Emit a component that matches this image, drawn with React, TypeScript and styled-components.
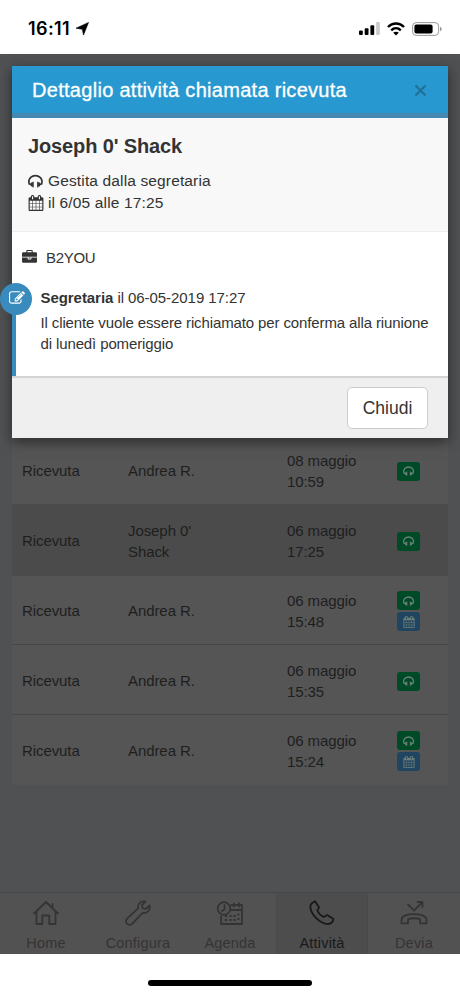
import React from "react";
import styled, { createGlobalStyle, css } from "styled-components";

const GlobalStyle = createGlobalStyle`
  *, *::before, *::after { box-sizing: border-box; }
  body { margin: 0; background: #fff; font-family: "Liberation Sans", Arial, sans-serif; }
`;

const Phone = styled.div`
  display: flex;
  flex-direction: column;
  width: 460px;
  height: 996px;
  overflow: hidden;
  background: #fff;
`;

const StatusBar = styled.header`
  display: flex;
  align-items: center;
  gap: 5px;
  height: 54px;
  padding: 3px 18px 0 28px;
`;

const Clock = styled.span`
  font: 600 18px/22px Inter, sans-serif;
  letter-spacing: 0.4px;
  color: #000;
`;

const StatusIcons = styled.div`
  display: flex;
  align-items: center;
  gap: 7px;
  margin-left: auto;
`;

const Screen = styled.div`
  position: relative;
  display: flex;
  flex-direction: column;
  height: 900px;
  background: #4f5153;
`;

const TableArea = styled.main`
  flex: 1;
  padding: 381px 12px 0;
`;

const Table = styled.div`
  display: flex;
  flex-direction: column;
  background: #555;
`;

const Row = styled.div<{ $selected?: boolean; $ruled?: boolean }>`
  display: grid;
  grid-template-columns: 106px 159px 110px 1fr;
  align-items: center;
  height: 70px;
  padding-left: 10px;
  font-size: 15px;
  line-height: 21px;
  letter-spacing: -0.08px;
  color: #1e1e1e;
  ${(p) => p.$ruled && css`box-shadow: inset 0 -1px #474747;`}
  ${(p) => p.$selected && css`background: #4b4b4b; box-shadow: 0 -1px #4b4b4b, 0 1px #4b4b4b;`}
`;

const Cell = styled.div<{ $narrow?: boolean }>`
  max-width: ${(p) => (p.$narrow ? "86px" : "none")};
  padding-top: 1px;
`;

const Badges = styled.div`
  display: flex;
  flex-direction: column;
  gap: 2px;
  padding-top: 2px;
`;

const Badge = styled.span<{ $tone: "green" | "blue" }>`
  display: flex;
  align-items: center;
  justify-content: center;
  width: 23px;
  height: 19px;
  border-radius: 3px;
  color: #6b7f78;
  background: ${(p) => (p.$tone === "green" ? "#004b27" : "#1f4560")};
`;

const TabBar = styled.nav`
  display: grid;
  grid-template-columns: repeat(5, 1fr);
  height: 62px;
  border-top: 1px solid #474747;
  background: #525252;
`;

const Tab = styled.div<{ $active?: boolean }>`
  display: flex;
  flex-direction: column;
  align-items: center;
  padding-top: 7px;
  font-size: 14.5px;
  line-height: 18px;
  letter-spacing: 0.2px;
  color: ${(p) => (p.$active ? "#191919" : "#343434")};
  ${(p) => p.$active && css`background: #4d4d4d; box-shadow: inset 1px 0 #494949, inset -1px 0 #494949;`}
  svg { margin-bottom: 8px; }
`;

const Dialog = styled.section`
  position: absolute;
  top: 12px;
  left: 12px;
  width: 436px;
  height: 372px;
  display: flex;
  flex-direction: column;
  background: #fff;
  color: #333;
  box-shadow: 0 4px 12px rgba(0, 0, 0, 0.5);
`;

const DialogHeader = styled.header`
  display: flex;
  align-items: center;
  justify-content: space-between;
  height: 52px;
  padding: 0 21px 3px 20px;
  border-bottom: 5px solid #4489b2;
  background: #2898d0;
`;

const DialogTitle = styled.h1`
  margin: 0;
  padding-top: 3px;
  font-size: 20px;
  line-height: 24px;
  font-weight: 400;
  letter-spacing: 0.29px;
  color: #fff;
  -webkit-text-stroke: 0.3px #fff;
`;

const CloseButton = styled.button`
  display: flex;
  padding: 5px 0 0;
  border: 0;
  background: none;
  color: #20719a;
`;

const Contact = styled.div`
  height: 114px;
  padding: 16px 16px 0;
  border-bottom: 1px solid #eee;
  background: #f8f8f8;
`;

const ContactName = styled.h2`
  margin: 0 0 11px;
  font-size: 20px;
  line-height: 24px;
  letter-spacing: -0.13px;
`;

const ContactLine = styled.div`
  display: flex;
  align-items: center;
  gap: 4px;
  height: 22px;
  padding-top: 1px;
  font-size: 15.5px;
  letter-spacing: 0.14px;
`;

const Notes = styled.div`
  flex: 1;
  padding-top: 14px;
`;

const Company = styled.div`
  display: flex;
  align-items: center;
  gap: 9px;
  height: 22px;
  padding-left: 10px;
  font-size: 15px;
  letter-spacing: -0.3px;
`;

const Note = styled.article`
  position: relative;
  height: 92px;
  margin-top: 16px;
  padding: 3px 0 0 24.5px;
  border-left: 4px solid #398bbd;
  font-size: 15px;
  line-height: 21px;
  letter-spacing: -0.12px;
`;

const NoteMarker = styled.span`
  position: absolute;
  top: -1px;
  left: -16px;
  display: flex;
  align-items: center;
  justify-content: center;
  width: 32px;
  height: 32px;
  padding: 0 0 3px 2px;
  border-radius: 50%;
  background: #398bbd;
  color: #fff;
`;

const NoteMeta = styled.div`
  margin-bottom: 4px;
  letter-spacing: -0.06px;
`;

const NoteText = styled.p`
  margin: 0;
  width: 396px;
`;

const DialogFooter = styled.footer`
  display: flex;
  justify-content: flex-end;
  height: 62px;
  padding: 9px 20px 0;
  border-top: 2px solid #d4d4d4;
  background: #efefef;
`;

const DismissButton = styled.button`
  width: 81px;
  height: 42px;
  padding: 0;
  border: 1px solid #ccc;
  border-radius: 5px;
  background: #fff;
  font: 17.5px/24px "Liberation Sans", Arial, sans-serif;
  color: #333;
`;

const HomeArea = styled.footer`
  display: flex;
  justify-content: center;
  height: 42px;
  padding-top: 26px;
`;

const HomeIndicator = styled.span`
  width: 164px;
  height: 6px;
  border-radius: 3px;
  background: #000;
`;

const glyphs = {
  headphones:
    "M1664 960q0 166-60 314l-20 49-185 33q-22 83-90.500 136.500t-156.500 53.500v32q0 14-9 23t-23 9h-64q-14 0-23-9t-9-23v-576q0-14 9-23t23-9h64q14 0 23 9t9 23v32q71 0 130 35.500t93 95.500l68-12q29-95 29-193 0-148-88-279t-236.500-209-315.500-78-315.500 78-236.500 209-88 279q0 98 29 193l68 12q34-60 93-95.500t130-35.500v-32q0-14 9-23t23-9h64q14 0 23 9t9 23v576q0 14-9 23t-23 9h-64q-14 0-23-9t-9-23v-32q-88 0-156.500-53.500t-90.500-136.500l-185-33-20-49q-60-148-60-314 0-151 67-291t179-242.500 266-163.500 320-61 320 61 266 163.500 179 242.500 67 291z",
  calendar:
    "M192 1664h288v-288h-288v288zm352 0h320v-288h-320v288zm-352-352h288v-320h-288v320zm352 0h320v-320h-320v320zm-352-384h288v-288h-288v288zm736 736h320v-288h-320v288zm-384-736h320v-288h-320v288zm768 736h288v-288h-288v288zm-384-352h320v-320h-320v320zm-352-864v-288q0-13-9.500-22.500t-22.500-9.500h-64q-13 0-22.500 9.500t-9.500 22.500v288q0 13 9.500 22.500t22.500 9.500h64q13 0 22.500-9.500t9.500-22.500zm736 864h288v-320h-288v320zm-384-384h320v-288h-320v288zm384 0h288v-288h-288v288zm32-480v-288q0-13-9.500-22.500t-22.500-9.500h-64q-13 0-22.500 9.500t-9.500 22.500v288q0 13 9.500 22.500t22.500 9.500h64q13 0 22.500-9.500t9.500-22.500zm384-64v1280q0 52-38 90t-90 38h-1408q-52 0-90-38t-38-90v-1280q0-52 38-90t90-38h128v-96q0-66 47-113t113-47h64q66 0 113 47t47 113v96h384v-96q0-66 47-113t113-47h64q66 0 113 47t47 113v96h128q52 0 90 38t38 90z",
  briefcase:
    "M640 256h512v-128h-512v128zm1152 640v480q0 66-47 113t-113 47h-1472q-66 0-113-47t-47-113v-480h672v160q0 26 19 45t45 19h320q26 0 45-19t19-45v-160h672zm-768 0v128h-256v-128h256zm768-480v384h-1792v-384q0-66 47-113t113-47h352v-160q0-40 28-68t68-28h576q40 0 68 28t28 68v160h352q66 0 113 47t47 113z",
  edit:
    "M888 1184l116-116-152-152-116 116v56h96v96h56zm440-720q-16-16-33 1l-350 350q-17 17-1 33t33-1l350-350q17-17 1-33zm80 594v190q0 119-84.500 203.500t-203.500 84.500h-832q-119 0-203.500-84.500t-84.500-203.500v-832q0-119 84.500-203.500t203.500-84.500h832q63 0 117 25 15 7 18 23 3 17-9 29l-49 49q-14 14-32 8-23-6-45-6h-832q-66 0-113 47t-47 113v832q0 66 47 113t113 47h832q66 0 113-47t47-113v-126q0-13 9-22l64-64q15-15 35-7t20 29zm-96-738l288 288-672 672h-288v-288zm444 132l-92 92-288-288 92-92q28-28 68-28t68 28l152 152q28 28 28 68t-28 68z",
};

function Glyph({ name, size }: { name: keyof typeof glyphs; size: number }) {
  return (
    <svg width={size} height={size} viewBox="0 0 1792 1792" fill="currentColor">
      <path d={glyphs[name]} />
    </svg>
  );
}

function LineIcon({ children }: { children: React.ReactNode }) {
  return (
    <svg width="28" height="26" viewBox="0 0 28 26" fill="none" stroke="currentColor" strokeWidth="1.8" strokeLinejoin="round" strokeLinecap="round">
      {children}
    </svg>
  );
}

const tabs = [
  {
    label: "Home",
    icon: <path d="M2 13.500 14 2l12 11.500M4.500 12v12h5.800v-8.500h7V24h6.200V12M20.500 7.500V4" />,
  },
  {
    label: "Configura",
    icon: (
      <path d="M21.500 1.600C17 .4 13.300 3.800 14.200 8.200L3.300 18.300c-4 4.200 1.500 8.400 5 5.400L18.700 12.900c4.600 1 8-3 6.800-7.400L21.700 9l-3.100-.8-.7-3z" />
    ),
  },
  {
    label: "Agenda",
    icon: (
      <>
        <circle cx="8" cy="8.500" r="6.300" />
        <path d="M8.500 5v4.500L6 11M15.500 5H26v19H5v-7.500M14.500 10H26M18 3.500v3M23 3.500v3" />
        <path d="M9.500 16h1M14 16h1M18 16h1M22 14.500h.8M9.500 20h1M14 20h1M18 20h1M22 19h.8" />
      </>
    ),
  },
  {
    label: "Attività",
    active: true,
    icon: (
      <path d="M3.500 3.500 7 1.200l3.700 5.600c1 1.500-1.800 2.800-1.100 4.200 1 2.300 3.500 4.800 6 5.800 1.500.6 2.300-2.300 3.900-1.500l5.700 3.500c.8 2.200-2.500 5.200-5.200 5.400C12 23.500 3.200 15 2.400 7.300c-.1-1.500.2-2.800 1.100-3.800z" />
    ),
  },
  {
    label: "Devia",
    icon: (
      <>
        <path d="m8 4.500 6 6 8.500-8.500M17.500 2h5v5" />
        <path d="M1.500 19.500c.5-7.300 24.500-7.300 25 0v3.800h-6.500v-4c-2.500-1.400-9.500-1.400-12 0v4H1.500z" />
      </>
    ),
  },
];

const calls = [
  { name: "Andrea R.", day: "08 maggio", time: "10:59" },
  { name: "Joseph 0' Shack", day: "06 maggio", time: "17:25", selected: true },
  { name: "Andrea R.", day: "06 maggio", time: "15:48", booked: true, ruled: true },
  { name: "Andrea R.", day: "06 maggio", time: "15:35", ruled: true },
  { name: "Andrea R.", day: "06 maggio", time: "15:24", booked: true },
];

export default function App() {
  return (
    <Phone>
      <GlobalStyle />
      <StatusBar>
        <Clock>16:11</Clock>
        <svg width="14" height="14" viewBox="0 0 14 14">
          <path d="M13.500.5 8.500 13 7.300 7.300 1 6.200z" stroke="#000" strokeWidth=".6" strokeLinejoin="round" />
        </svg>
        <StatusIcons>
          <svg width="21" height="13" viewBox="0 0 21 13">
            <rect x="0" y="8.500" width="3.800" height="4.500" rx="1" />
            <rect x="5.700" y="6.300" width="3.800" height="6.700" rx="1" />
            <rect x="11.400" y="3.300" width="3.800" height="9.700" rx="1" />
            <rect x="17.100" y="0" width="3.800" height="13" rx="1" fill="#ccc" />
          </svg>
          <svg width="18" height="14" viewBox="0 0 18 14" fill="none" stroke="#000" strokeWidth="2.400">
            <path d="M1 5C5.500.3 12.500.3 17 5M4.200 8.300c2.800-2.700 6.800-2.700 9.600 0" />
            <path d="M9 13.500 6.200 10.800c1.600-1.300 4-1.300 5.600 0z" fill="#000" stroke="none" />
          </svg>
          <svg width="30" height="14" viewBox="0 0 30 14">
            <rect x=".6" y=".6" width="26" height="12.800" rx="3.600" fill="none" stroke="#999" strokeWidth="1" />
            <rect x="2.400" y="2.400" width="18.200" height="9.200" rx="2" />
            <path d="M28 4.800c2.300.8 2.300 3.600 0 4.400z" fill="#999" />
          </svg>
        </StatusIcons>
      </StatusBar>

      <Screen>
        <TableArea>
          <Table>
            {calls.map((call) => (
              <Row key={call.time} $selected={call.selected} $ruled={call.ruled}>
                <Cell>Ricevuta</Cell>
                <Cell $narrow>{call.name}</Cell>
                <Cell>
                  {call.day}
                  <br />
                  {call.time}
                </Cell>
                <Badges>
                  <Badge $tone="green">
                    <Glyph name="headphones" size={12} />
                  </Badge>
                  {call.booked && (
                    <Badge $tone="blue">
                      <Glyph name="calendar" size={12} />
                    </Badge>
                  )}
                </Badges>
              </Row>
            ))}
          </Table>
        </TableArea>
        <TabBar>
          {tabs.map((tab) => (
            <Tab key={tab.label} $active={tab.active}>
              <LineIcon>{tab.icon}</LineIcon>
              {tab.label}
            </Tab>
          ))}
        </TabBar>

        <Dialog>
          <DialogHeader>
            <DialogTitle>Dettaglio attività chiamata ricevuta</DialogTitle>
            <CloseButton aria-label="Chiudi">
              <svg width="13" height="13" viewBox="0 0 13 13" stroke="currentColor" strokeWidth="2.400">
                <path d="m1.500 1.500 10 10m0-10-10 10" />
              </svg>
            </CloseButton>
          </DialogHeader>
          <Contact>
            <ContactName>Joseph 0' Shack</ContactName>
            <ContactLine>
              <Glyph name="headphones" size={16} />
              Gestita dalla segretaria
            </ContactLine>
            <ContactLine>
              <Glyph name="calendar" size={16} />
              il 6/05 alle 17:25
            </ContactLine>
          </Contact>
          <Notes>
            <Company>
              <Glyph name="briefcase" size={15} />
              B2YOU
            </Company>
            <Note>
              <NoteMarker>
                <Glyph name="edit" size={16} />
              </NoteMarker>
              <NoteMeta>
                <strong>Segretaria</strong> il 06-05-2019 17:27
              </NoteMeta>
              <NoteText>Il cliente vuole essere richiamato per conferma alla riunione di lunedì pomeriggio</NoteText>
            </Note>
          </Notes>
          <DialogFooter>
            <DismissButton>Chiudi</DismissButton>
          </DialogFooter>
        </Dialog>
      </Screen>

      <HomeArea>
        <HomeIndicator />
      </HomeArea>
    </Phone>
  );
}
